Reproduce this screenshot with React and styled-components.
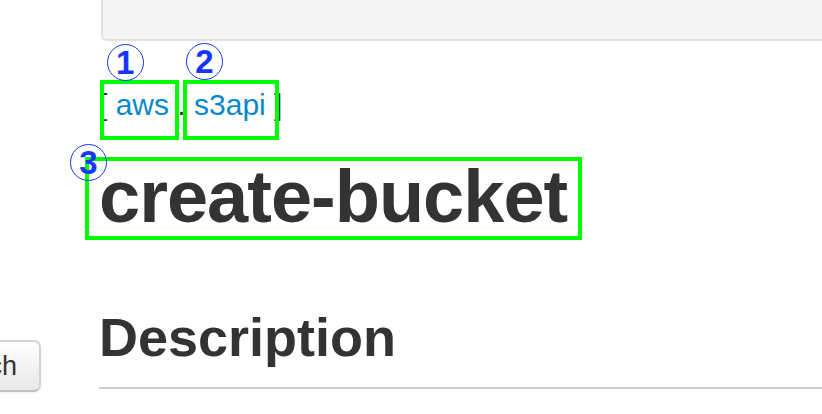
import styled, { createGlobalStyle } from 'styled-components'

const GlobalStyle = createGlobalStyle`
  html, body {
    margin: 0;
    padding: 0;
    overflow: hidden;
    background: #ffffff;
  }
  body {
    font-family: "Liberation Sans", Arial, Helvetica, sans-serif;
    color: #333333;
  }
`

const Page = styled.div`
  display: grid;
  grid-template-columns: 99px 1fr;
  width: 822px;
  height: 414px;
`

const Sidebar = styled.div`
  display: flex;
  flex-direction: column;
  align-items: flex-end;
  padding-top: 340px;
  padding-right: 58px;
`

const SearchButton = styled.button`
  height: 52px;
  padding: 0 22px;
  font-family: "Liberation Sans", Arial, sans-serif;
  font-size: 27px;
  color: #333333;
  white-space: nowrap;
  border: 2px solid #d4d4d4;
  border-bottom-color: #c2c2c2;
  border-radius: 7px;
  background: linear-gradient(to bottom, #ffffff, #e8e8e8);
  box-shadow: 0 1px 3px rgba(0, 0, 0, 0.08);
`

const Main = styled.div`
  display: flex;
  flex-direction: column;
`

const Well = styled.div`
  height: 39px;
  margin-left: 2px;
  background: #f4f4f4;
  border: 2px solid #e2e2e2;
  border-top: none;
  border-right: none;
  border-bottom-left-radius: 6px;
`

const Breadcrumb = styled.div`
  margin-top: 44px;
  font-size: 30px;
  line-height: 40px;
  white-space: nowrap;
`

const Link = styled.a`
  color: #0a88cc;
  text-decoration: none;
`

const Title = styled.h1`
  margin: 31px 0 0;
  font-size: 74px;
  line-height: 81px;
  font-weight: 700;
  letter-spacing: -1px;
  white-space: nowrap;
`

const SectionTitle = styled.h2`
  margin: 71px 0 0;
  padding-bottom: 21px;
  font-size: 54px;
  line-height: 58px;
  font-weight: 700;
  border-bottom: 2px solid #cfcfcf;
`

const Mark = styled.span`
  position: relative;
`

const Frame = styled.span`
  position: absolute;
  top: ${p => p.$top}px;
  bottom: ${p => p.$bottom}px;
  left: ${p => p.$left}px;
  right: ${p => p.$right}px;
  border: 4px solid #00ff00;
  pointer-events: none;
`

const Badge = styled.span`
  position: absolute;
  left: ${p => p.$x}px;
  top: ${p => p.$y}px;
  width: 35px;
  height: 35px;
  display: flex;
  align-items: center;
  justify-content: center;
  border: 1.5px solid #1436ff;
  border-radius: 50%;
  color: #1436ff;
  font-family: "Liberation Sans", Arial, sans-serif;
  font-size: 33px;
  font-weight: 700;
  letter-spacing: 0;
  line-height: 1;
`

const Annotated = ({ n, frame, badge, children }) => (
  <Mark>
    {children}
    <Frame $top={frame[0]} $right={frame[1]} $bottom={frame[2]} $left={frame[3]} />
    <Badge $x={frame[3] + badge[0] - 19} $y={frame[0] + badge[1] - 19}>{n}</Badge>
  </Mark>
)

export default function App() {
  return (
    <>
      <GlobalStyle />
      <Page>
        <Sidebar>
          <SearchButton>Search</SearchButton>
        </Sidebar>
        <Main>
          <Well />
          <Breadcrumb>
            [ <Annotated n="1" frame={[-8, -10, -19, -16]} badge={[26, -17]}><Link href="#">aws</Link></Annotated>
            {' . '}
            <Annotated n="2" frame={[-8, -13, -19, -11]} badge={[22, -18]}><Link href="#">s3api</Link></Annotated> ]
          </Breadcrumb>
          <Title>
            <Annotated n="3" frame={[2, -15, -2, -14]} badge={[4, 6]}>create-bucket</Annotated>
          </Title>
          <SectionTitle>Description</SectionTitle>
        </Main>
      </Page>
    </>
  )
}
